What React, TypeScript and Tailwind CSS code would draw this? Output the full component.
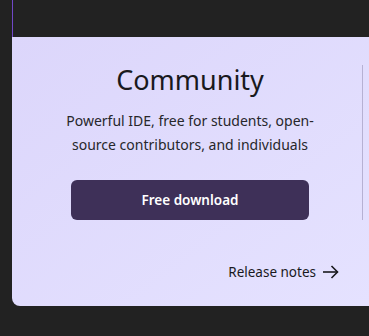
import { FC } from "react";

const ArrowRight: FC = () => (
  <svg width="17" height="14" viewBox="0 0 17 14" fill="none" stroke="currentColor" strokeWidth="1.6">
    <path d="M1 7h14.5" />
    <path d="M9.5 1l6 6-6 6" />
  </svg>
);

const App: FC = () => {
  return (
    <div
      className="w-[369px] h-[336px] bg-[#222222] overflow-hidden pl-[12px]"
      style={{ fontFamily: '"Noto Sans", "Open Sans", sans-serif' }}
    >
      {/* top strip */}
      <div className="h-[37px] border-l border-[#7048c8]" />

      {/* card */}
      <div className="h-[269px] rounded-bl-lg bg-gradient-to-br from-[#dcd6fb] to-[#e5e2ff] flex">
        <div className="w-[350px] shrink-0 pl-[6px] flex flex-col">
          <div className="flex flex-col items-center pt-[23px]">
            <h2 className="text-[27px] leading-[40px] text-[#19191d]">Community</h2>
            <p className="mt-[9px] text-[14px] leading-[24px] text-[#27272b] text-center whitespace-nowrap">
              Powerful IDE, free for students, open-
              <br />
              source contributors, and individuals
            </p>
            <button className="mt-[23px] w-[238px] h-[40px] rounded-md bg-[#3e3058] text-white text-[13.5px] font-semibold">
              Free download
            </button>
          </div>
          <div className="mt-auto mb-[24px] flex justify-end pr-[23px]">
            <a className="flex items-center gap-[6px] text-[13.5px] text-[#19191d]">
              Release notes
              <ArrowRight />
            </a>
          </div>
        </div>
        <div className="mt-[28px] w-px h-[155px] bg-[#b6b1d3]" />
      </div>
    </div>
  );
};

export default App;
